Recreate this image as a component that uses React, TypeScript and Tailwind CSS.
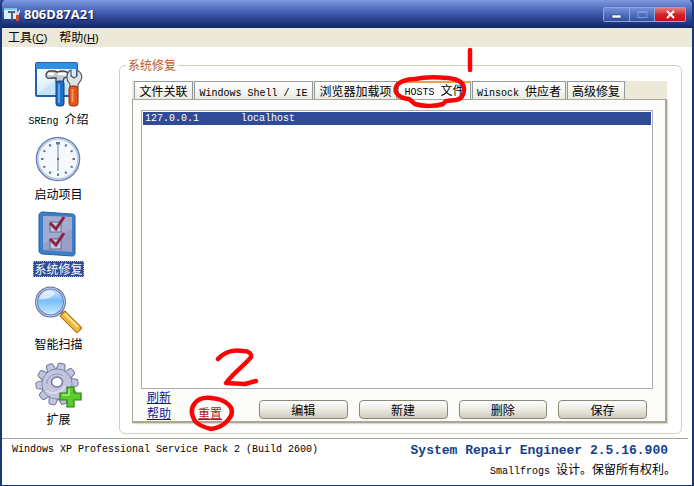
import React, { useState } from 'react';

const sections = [
  { id: 'about', label: '介绍', prefix: 'SREng', icon: ToolsIcon },
  { id: 'startup', label: '启动项目', icon: ClockIcon },
  { id: 'repair', label: '系统修复', icon: ChecklistIcon },
  { id: 'scan', label: '智能扫描', icon: MagnifierIcon },
  { id: 'extend', label: '扩展', icon: GearIcon },
];

const actions = ['编辑', '新建', '删除', '保存'];

const gearTeeth = [0, 36, 72, 108, 144, 180, 216, 252, 288, 324];
const clockHours = [1, 2, 3, 4, 5, 6, 7, 8, 9, 10, 11, 12];

// Latin text next to 12px Chinese glyphs, half their width per letter
function Mono({ children }: { children: React.ReactNode }) {
  return <span className="font-['Liberation_Mono',monospace] text-[10px] leading-none whitespace-pre">{children}</span>;
}

function ToolsIcon() {
  return (
    <svg viewBox="0 0 48 48" className="w-12 h-12">
      <defs>
        <linearGradient id="pane" x1="0" y1="0" x2="1" y2="1">
          <stop offset="0" stopColor="#ffffff" />
          <stop offset="1" stopColor="#b4dcf8" />
        </linearGradient>
      </defs>
      <rect x="0" y="2" width="43" height="35" rx="2" fill="#1c62b0" />
      <rect x="1" y="3" width="41" height="6" fill="#3090e4" />
      <rect x="2" y="9" width="39" height="26" fill="url(#pane)" />
      <path d="M2 34 21 20l20 14v1H2z" fill="#c5e4fa" />
      <path d="M11 15c0-2 2-4 4-4h5c1 1 2 1 3 1 5-2 10-1 14 5l-1 2c-3-2-5-2-7-1l-1 4h-7v-4h-5c-3 1-5 0-5-3z" fill="#c5cad0" stroke="#3c4149" strokeWidth="1.300" />
      <path d="M13 14h6M23 14h8" stroke="#ffffff" strokeWidth="2.500" />
      <rect x="21" y="21" width="8" height="25" rx="2.500" fill="#1d6fc6" stroke="#123f7d" />
      <path d="M24 24v19" stroke="#65adf0" strokeWidth="1.800" />
      <path d="M36 10v6l3 2 3-2v-6c4 2 6 6 4 10-1 2-3 3-3 5v3h-8v-3c0-2-3-3-3-7 0-4 1-7 4-8z" fill="#dfe2e6" stroke="#555b63" strokeWidth="1.200" />
      <rect x="34" y="26" width="9" height="20" rx="3" fill="#e8551a" stroke="#8d2d09" />
      <path d="M37.500 29v13" stroke="#ff9d66" strokeWidth="1.800" />
    </svg>
  );
}

function ClockIcon() {
  return (
    <svg viewBox="0 0 48 48" className="w-12 h-12">
      <circle cx="24" cy="24" r="21.500" fill="#f5f9fe" stroke="#6c82ad" strokeWidth="1.600" />
      <circle cx="24" cy="24" r="20" fill="none" stroke="#b4caea" strokeWidth="1.500" />
      {clockHours.map((h) => (
        <g key={h} transform={`rotate(${h * 30} 24 24)`}>
          <path d="M24 7v2.500" stroke="#6576a0" strokeWidth={h === 12 ? 4 : 2} />
        </g>
      ))}
      <path d="M24 9v27" stroke="#8492ae" strokeWidth="1.200" />
      <circle cx="24" cy="24" r="1" fill="#3c4c70" />
    </svg>
  );
}

function ChecklistIcon() {
  return (
    <svg viewBox="0 0 48 48" className="w-12 h-12">
      <path d="M9 2 38 4c2 0 3 1 3 3v36c0 2-1 3-3 3L9 44c-2 0-4-1-4-3V5c0-2 2-3 4-3z" fill="#3b7fc8" stroke="#2b5d9e" />
      <path d="M9 6l29 1v35L9 40z" fill="#979ec8" />
      <path d="M9 6l29 1v12L9 34z" fill="#a5abcf" />
      <rect x="16" y="12" width="11" height="10" fill="#c3c8df" stroke="#626b9a" />
      <rect x="16" y="29" width="11" height="10" fill="#c3c8df" stroke="#626b9a" />
      <path d="M16 13l6 6 8-12" fill="none" stroke="#8c2445" strokeWidth="3" />
      <path d="M16 29l6 6 8-12" fill="none" stroke="#8c2445" strokeWidth="3" />
    </svg>
  );
}

function MagnifierIcon() {
  return (
    <svg viewBox="0 0 48 48" className="w-12 h-12">
      <defs>
        <linearGradient id="lens" x1="0" y1="0" x2="0" y2="1">
          <stop offset="0" stopColor="#d6edff" />
          <stop offset="0.450" stopColor="#7cbcf8" />
          <stop offset="1" stopColor="#c9f3ff" />
        </linearGradient>
      </defs>
      <path d="M26 26l6 5" stroke="#7d88ad" strokeWidth="4" />
      <path d="M31 31l12 12" stroke="#a86e12" strokeWidth="8" strokeLinecap="square" />
      <path d="M31 31l12 12" stroke="#f0b93a" strokeWidth="6" strokeLinecap="square" />
      <path d="M31 29l13 13" stroke="#ffe596" strokeWidth="2" />
      <circle cx="16.500" cy="17" r="14" fill="url(#lens)" stroke="#6979aa" strokeWidth="3" />
      <circle cx="16.500" cy="17" r="14" fill="none" stroke="#c9d2ec" strokeWidth="1" />
      <path d="M5 14c2-7 10-10 16-6-2 5-9 7-16 6z" fill="#ffffff" opacity="0.600" />
    </svg>
  );
}

function GearIcon() {
  return (
    <svg viewBox="0 0 48 48" className="w-12 h-12">
      <g fill="#c3c5e0" stroke="#737796" strokeLinejoin="round">
        {gearTeeth.map((a) => (
          <path key={a} d="M17.500 10.500l1-6q.3-1.500 1.500-1.500h4q1.200 0 1.500 1.500l1 6z" transform={`rotate(${a + 14} 22 24)`} />
        ))}
      </g>
      <circle cx="22" cy="24" r="15" fill="#c3c5e0" stroke="#737796" />
      <circle cx="22" cy="24" r="14.500" fill="#c3c5e0" />
      <path d="M12 24a10 10 0 0 1 16-8" fill="none" stroke="#9295b5" />
      <path d="M11 31c7 4 15 2 19-5" fill="none" stroke="#dcdeef" strokeWidth="2" />
      <ellipse cx="22" cy="22" rx="5.500" ry="5" fill="#ffffff" stroke="#737796" strokeWidth="1.500" />
      <path d="M32 27h7v6h7v7h-7v7h-7v-7h-7v-7h7z" fill="#5ccb2c" stroke="#248112" strokeWidth="1.200" />
      <path d="M34 29v6h-7" fill="none" stroke="#a9ef80" strokeWidth="1.500" />
    </svg>
  );
}

function TitleBar() {
  return (
    <header className="flex h-7 items-center gap-1 bg-linear-to-b from-[#7e98e0] via-[#3d56aa] to-[#0e2767] pl-0.5 pr-1.5">
      <svg viewBox="0 0 16 16" className="w-4 h-4">
        <rect x="0" y="2" width="13" height="11" fill="#d7eefd" />
        <path d="M0 2h13v2H0z" fill="#7ec3f5" />
        <path d="M4 5h7l1 2H9v7H7V7H4z" fill="#506078" />
        <path d="M11 3v4h1v6h3V7h1V3l-2 3z" fill="#d0d3d8" />
        <path d="M12 9h3v6h-3z" fill="#d34a28" />
      </svg>
      <h1 className="flex-1 font-['Open_Sans',sans-serif] text-[13px] leading-4 font-bold text-white [text-shadow:1px_1px_1px_#0a1c50]">
        806D87A21
      </h1>
      <div className="flex h-[15px] overflow-hidden rounded-xs border border-[#8fa5df]">
        <button aria-label="最小化" className="flex w-[25px] items-center justify-center bg-linear-to-b from-[#7590d8] to-[#3250a4]">
          <svg viewBox="0 0 11 9" className="w-[11px]"><path d="M1 5h9v3H1z" fill="#fff" stroke="#17306f" strokeWidth="0.500" /></svg>
        </button>
        <button aria-label="最大化" disabled className="flex w-[26px] items-center justify-center border-x border-[#8fa5df] bg-linear-to-b from-[#7590d8] to-[#3250a4]">
          <svg viewBox="0 0 11 9" className="w-[11px]"><path d="M1 1.500h9v6H1zM1 2.500h9" fill="none" stroke="#7f98dc" /></svg>
        </button>
        <button aria-label="关闭" className="flex w-[30px] items-center justify-center bg-linear-to-b from-[#e9777a] via-[#d02328] to-[#ba1519]">
          <svg viewBox="0 0 11 9" className="w-[11px]"><path d="M2 1l7 7M9 1L2 8" stroke="#fff" strokeWidth="2" /></svg>
        </button>
      </div>
    </header>
  );
}

function Annotations() {
  return (
    <svg width="694" height="486" viewBox="0 0 694 486" className="pointer-events-none absolute top-0 left-0" fill="none" stroke="#fa0505" strokeWidth="4.500" strokeLinecap="round" strokeLinejoin="round">
      <path d="M470 50v20" />
      <path d="M415 79c-9 0-17 3-19 8-2 6 3 11 13 12l6 5c9 3 22 2 28 0l3-3 10-1c6-1 8-6 8-11 0-7-7-10-16-11-11-1-24-1-33 1" />
      <path d="M218 359c5-6 14-10 25-8 6 0 9 3 8 6-5 7-16 14-25 26l19 1 11-3" />
      <path d="M212 398c-9-1-14 1-17 5-5 6-3 13 0 18 3 4 8 6 16 8 8-1 14-5 17-9 5-5 5-11 1-15-4-4-10-7-20-7" />
    </svg>
  );
}

const tabs = [
  { id: 'assoc', text: '文件关联', className: 'w-[59px]' },
  { id: 'shell', text: <Mono>Windows Shell / IE</Mono>, className: 'w-[119px]' },
  { id: 'browser', text: '浏览器加载项', className: 'w-[83px]' },
  { id: 'hosts', text: <><Mono>{'HOSTS '}</Mono>文件</>, className: 'w-[73px]' },
  { id: 'winsock', text: <><Mono>{'Winsock '}</Mono>供应者</>, className: 'w-[94px]' },
  { id: 'advanced', text: '高级修复', className: 'w-[58px]' },
];

export default function App() {
  const [section, setSection] = useState('repair');
  const [tab, setTab] = useState('hosts');

  return (
    <div className="relative min-h-screen bg-[#2c4ba0] font-['Noto_Sans_CJK_SC',sans-serif] text-[12px] leading-4 text-black">
      <div className="flex min-h-screen flex-col overflow-hidden rounded-t-md border-x-2 border-b border-[#193679] bg-white">
        <TitleBar />

        <nav className="flex h-[19px] items-center gap-3 bg-[#ece9d8] px-1.5">
          <button>工具<span className="font-['Liberation_Sans',sans-serif] text-[11px]">(<u>C</u>)</span></button>
          <button>帮助<span className="font-['Liberation_Sans',sans-serif] text-[11px]">(<u>H</u>)</span></button>
        </nav>

        <main className="flex flex-1 pr-2.5">
          <aside className="flex w-[117px] shrink-0 flex-col items-center gap-2 pt-[13px] pr-1">
            {sections.map((item) => (
              <button key={item.id} onClick={() => setSection(item.id)} className="flex flex-col items-center gap-[3px]">
                <item.icon />
                <span
                  className={
                    section === item.id
                      ? 'bg-[#304c94] px-px leading-4 text-white outline-1 -outline-offset-1 outline-dotted outline-[#c9b66d]'
                      : 'px-px leading-4'
                  }
                >
                  {item.prefix && <Mono>{item.prefix + ' '}</Mono>}
                  {item.label}
                </span>
              </button>
            ))}
          </aside>

          <fieldset className="mt-2.5 mb-1 flex min-w-0 flex-1 flex-col rounded-md border border-[#d0d0bf] pr-3.5 pb-2.5 pl-3">
            <legend className="-ml-1.5 px-0.5 text-[#b85a24]">系统修复</legend>
            <div className="mt-2 flex flex-1 flex-col">
              <div role="tablist" className="flex h-[18px] gap-px bg-[#ece9d8] pl-0.5">
                {tabs.map((t) => (
                  <button
                    key={t.id}
                    role="tab"
                    aria-selected={tab === t.id}
                    onClick={() => setTab(t.id)}
                    className={`${t.className} shrink-0 overflow-hidden border border-b-0 whitespace-nowrap ${
                      tab === t.id
                        ? 'border-[#919b9c] border-t-2 border-t-[#e8a33a] bg-white leading-3'
                        : 'border-[#919b9c] bg-linear-to-b from-white to-[#ebebe4] leading-4'
                    }`}
                  >
                    {t.text}
                  </button>
                ))}
              </div>

              <div className="flex flex-1 flex-col border border-r-2 border-b-2 border-[#a9a898] bg-[#fcfcfb] pt-2.5 pr-3 pl-2 shadow-[1px_1px_1px_#ddd9c8]">
                <div role="listbox" aria-label="HOSTS" className="min-h-[200px] flex-1 border border-[#a5acb2] bg-white p-px">
                  <div role="option" aria-selected className="flex h-[13px] items-center bg-[#2f4a96] pl-0.5 font-['Liberation_Mono',monospace] text-[10px] leading-3 text-white">
                    <span className="w-24">127.0.0.1</span>
                    <span>localhost</span>
                  </div>
                </div>
                <div className="flex pr-1.5 pl-1.5">
                  <div className="grid w-28 shrink-0 grid-cols-[51px_1fr] leading-4 text-[#0b1a9c]">
                    <a href="#refresh" className="col-span-2 underline">刷新</a>
                    <a href="#help" className="underline">帮助</a>
                    <a href="#reset" className="text-[#b01820] underline">重置</a>
                  </div>
                  <div className="grid flex-1 grid-cols-4 gap-[11px] pt-[11px]">
                    {actions.map((a) => (
                      <button key={a} className="h-[19px] rounded-sm border border-[#8a8878] bg-linear-to-b from-white via-[#ebe9e0] to-[#cfcbbd] leading-4">
                        {a}
                      </button>
                    ))}
                  </div>
                </div>
              </div>
            </div>
          </fieldset>
        </main>

        <footer className="mr-1 flex h-[47px] justify-between border-t border-[#a5a59a] pt-0.5 pr-3 pl-2.5">
          <p className="font-['Liberation_Mono',monospace] text-[10px] leading-[18px]">
            Windows XP Professional Service Pack 2 (Build 2600)
          </p>
          <div className="text-right">
            <p className="pr-2 font-['Liberation_Mono',monospace] text-[13px] leading-5 font-bold text-[#153f85]">
              System Repair Engineer 2.5.16.900
            </p>
            <p><Mono>{'Smallfrogs '}</Mono>设计。保留所有权利。</p>
          </div>
        </footer>
      </div>
      <Annotations />
    </div>
  );
}
